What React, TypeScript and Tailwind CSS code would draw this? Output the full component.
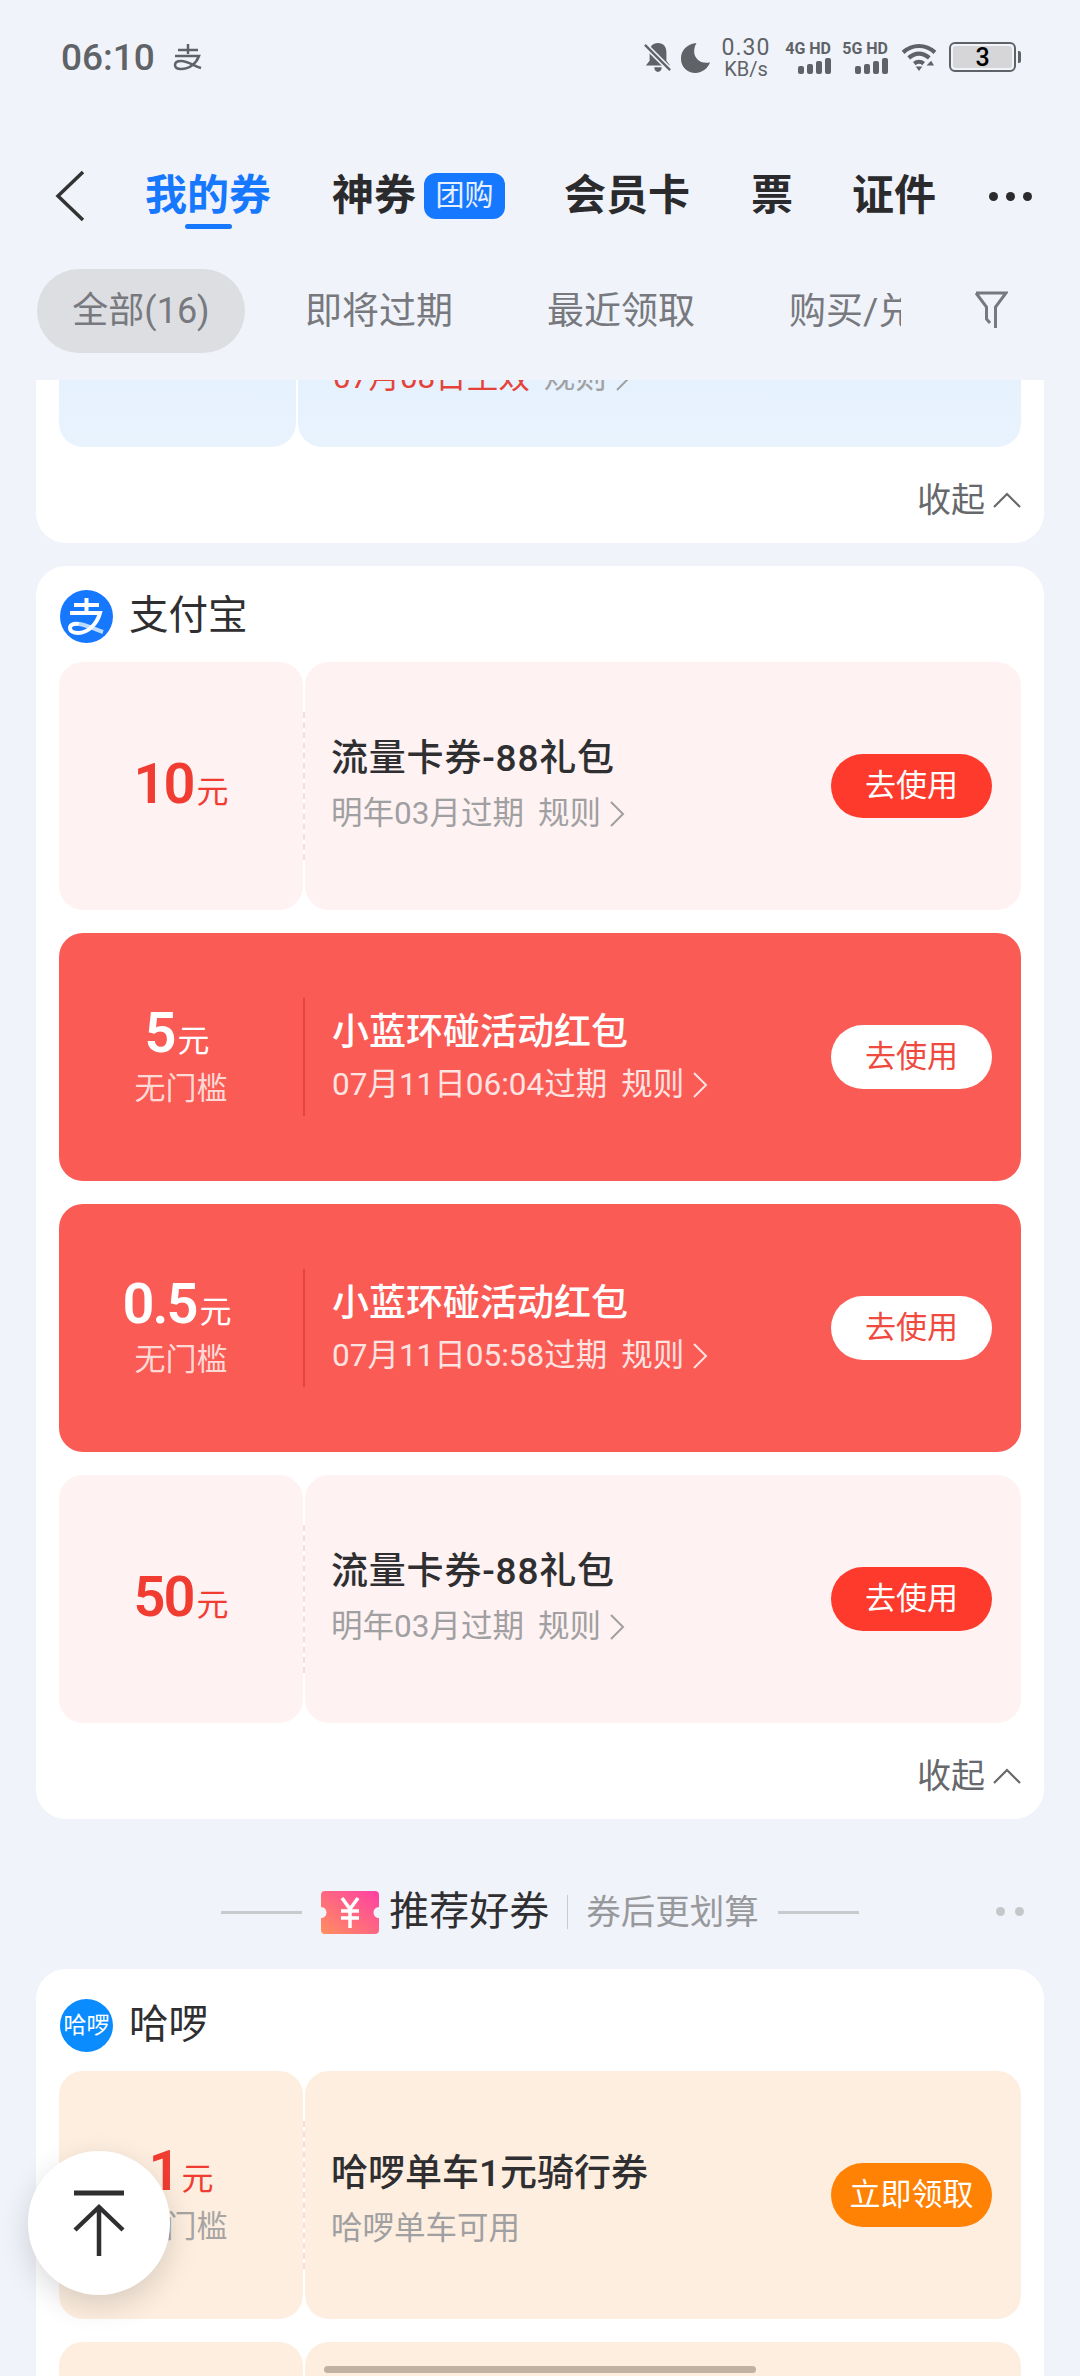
import type { ReactNode } from 'react';

const FONT = 'font-["Roboto","Noto_Sans_CJK_SC",sans-serif]';

type Tone = 'pink' | 'red' | 'cream';

interface Coupon {
  tone: Tone;
  amount: string;
  sub?: string;
  title: string;
  desc: string;
  rule?: boolean;
  cta: string;
}

const ALIPAY: Coupon[] = [
  { tone: 'pink', amount: '10', title: '流量卡券-88礼包', desc: '明年03月过期', rule: true, cta: '去使用' },
  { tone: 'red', amount: '5', sub: '无门槛', title: '小蓝环碰活动红包', desc: '07月11日06:04过期', rule: true, cta: '去使用' },
  { tone: 'red', amount: '0.5', sub: '无门槛', title: '小蓝环碰活动红包', desc: '07月11日05:58过期', rule: true, cta: '去使用' },
  { tone: 'pink', amount: '50', title: '流量卡券-88礼包', desc: '明年03月过期', rule: true, cta: '去使用' },
];

function StatusBar() {
  return (
    <div className="h-[114px] pl-[61px] pr-[59px] flex items-center justify-between text-[#5f6368]">
      <div className="flex items-center">
        <span className="text-[37px] leading-none font-medium">06:10</span>
        {/* 支付宝通知图标 */}
        <svg width="30" height="28" viewBox="0 0 30 28" className="ml-[18px]">
          <path d="M5 7h20M15 1v10M2 13h24C23 21 16 26 8 26c-4 0-6-1.500-6-4 0-3 3-4 6-4 7 0 13 5 20 7" fill="none" stroke="#5f6368" strokeWidth="2.500" />
        </svg>
      </div>
      <div className="flex items-center">
        {/* 静音 */}
        <svg width="28" height="32" viewBox="0 0 30 32" className="mr-[8px]">
          <path d="M15 1c6 0 9 4 9 10v9l4 5H2l4-5v-9C6 5 9 1 15 1zM11 27h8c0 3-2 5-4 5s-4-2-4-5z" fill="#5f6368" />
          <path d="M1 3l27 27" stroke="#f0f3f9" strokeWidth="6" />
          <path d="M1 3l27 27" stroke="#5f6368" strokeWidth="2.500" />
        </svg>
        {/* 勿扰 */}
        <svg width="31" height="31" viewBox="0 0 32 32" className="mr-[11px]">
          <path d="M17 1C8 2 1 8 1 17s7 15 15 15c7 0 13-5 15-11-8 2-14-2-16-8-1-4 0-9 2-12z" fill="#5f6368" />
        </svg>
        <div className="flex flex-col items-center w-[48px] mr-[13px] leading-none">
          <span className="text-[23px] h-[23px] tracking-[1px]">0.30</span>
          <span className="text-[20px] h-[20px]">KB/s</span>
        </div>
        <Signal label="4G HD" />
        <div className="w-[9px]" />
        <Signal label="5G HD" />
        <svg width="38" height="30" viewBox="0 0 38 32" className="ml-[12px] mr-[11px]">
          <path d="M2 11C12 2 26 2 36 11M8 17c7-6 15-6 22 0M14 23c3-2.500 7-2.500 10 0" fill="none" stroke="#5f6368" strokeWidth="4.500" />
          <path d="M15.500 26h7L19 31z" fill="#5f6368" />
          <path d="M27 25l5-5 3 5z" fill="#5f6368" />
        </svg>
        <div className="w-[67px] h-[30px] rounded-[6px] border-2 border-[#5f6368] p-[2px] flex">
          <div className="flex-1 bg-[#d6d6d8] rounded-[3px] flex items-center justify-center text-[25px] font-medium text-black leading-none">3</div>
        </div>
        <div className="w-[3px] h-[12px] ml-[2px] bg-[#5f6368] rounded-r-[2px]" />
      </div>
    </div>
  );
}

function Signal({ label }: { label: string }) {
  return (
    <div className="flex flex-col items-end w-[48px]">
      <span className="text-[16px] leading-[18px] font-bold whitespace-nowrap">{label}</span>
      <div className="flex items-end gap-[3px] h-[16px]">
        <span className="w-[6px] h-[8px] rounded-[2px] bg-[#5f6368]" />
        <span className="w-[6px] h-[10px] rounded-[2px] bg-[#5f6368]" />
        <span className="w-[6px] h-[13px] rounded-[2px] bg-[#5f6368]" />
        <span className="w-[6px] h-[16px] rounded-[2px] bg-[#5f6368]" />
      </div>
    </div>
  );
}

function NavTabs() {
  return (
    <div className="h-[134px] pt-[30px] relative flex items-center text-[#2b2b2d] font-bold text-[42px] leading-none">
      <svg width="32" height="52" viewBox="0 0 32 52" className="ml-[54px] mr-[59px]">
        <path d="M29 2L4 26l25 24" fill="none" stroke="#333" strokeWidth="3.500" />
      </svg>
      <div className="relative text-[#1677ff] mr-[61px]">
        我的券
        <span className="absolute left-[40px] top-[49px] w-[47px] h-[5px] rounded-full bg-[#1677ff]" />
      </div>
      <span>神券</span>
      <span className="ml-[8px] mr-[59px] w-[81px] h-[46px] rounded-[12px] bg-[#1677ff] text-[#e6f0ff] text-[29px] font-normal flex items-center justify-center">
        团购
      </span>
      <span className="mr-[61px]">会员卡</span>
      <span className="mr-[59px]">票</span>
      <span>证件</span>
      <div className="ml-[53px] flex gap-[8px]">
        <span className="w-[9px] h-[9px] rounded-full bg-[#2b2b2d]" />
        <span className="w-[9px] h-[9px] rounded-full bg-[#2b2b2d]" />
        <span className="w-[9px] h-[9px] rounded-full bg-[#2b2b2d]" />
      </div>
    </div>
  );
}

function FilterRow() {
  return (
    <div className="h-[132px] flex items-start text-[37px] leading-none text-[#77797e]">
      <div className="ml-[37px] mt-[21px] w-[208px] h-[84px] rounded-[42px] bg-[#dcdee2] flex items-center justify-center text-[36px]">
        全部(16)
      </div>
      <div className="mt-[21px] h-[84px] flex items-center">
        <span className="ml-[60px]">即将过期</span>
        <span className="ml-[94px]">最近领取</span>
        <span className="ml-[94px] w-[112px] overflow-hidden whitespace-nowrap">购买/兑换</span>
      </div>
      <svg width="34" height="38" viewBox="0 0 34 38" className="ml-[73px] mt-[43px]">
        <path d="M2 2h30L21.500 16v21M2 2l10.500 14v12l3.500 4" fill="none" stroke="#77797e" strokeWidth="3" />
      </svg>
    </div>
  );
}

function CollapseRow() {
  return (
    <div className="h-[96px] pt-[10px] pr-[23px] flex items-center justify-end gap-[8px] text-[34px] text-[#66686c] leading-none">
      收起
      <svg width="28" height="16" viewBox="0 0 28 16">
        <path d="M1 15L14 2l13 13" fill="none" stroke="#66686c" strokeWidth="2.200" />
      </svg>
    </div>
  );
}

function CouponRow({ c }: { c: Coupon }) {
  if (c.tone === 'red') {
    return (
      <div className="h-[248px] mx-[23px] rounded-[24px] bg-[#fa5b55] flex items-center text-white">
        <div className="w-[244px] flex flex-col items-center">
          <Amount value={c.amount} className="text-white mr-[8px]" />
          <span className="text-[31px] leading-[40px] text-[#fdd9d6] mt-[8px]">{c.sub}</span>
        </div>
        <div className="w-[2px] h-[118px] bg-[#e5443f]" />
        <div className="flex-1 pl-[27px]">
          <div className="text-[37px] leading-[48px] font-medium">{c.title}</div>
          <Desc text={c.desc} rule={c.rule} className="text-[#fde3e1] mt-[8px]" />
        </div>
        <div className="mr-[29px] w-[161px] h-[64px] rounded-full bg-white text-[#f04a3e] text-[31px] flex items-center justify-center">
          {c.cta}
        </div>
      </div>
    );
  }

  const pink = c.tone === 'pink';
  const bg = pink ? 'bg-[#fef2f3]' : 'bg-[#fdeedf]';
  const btn = pink ? 'bg-[#fe3a2d]' : 'bg-[#ff8205]';
  return (
    <div className="h-[248px] mx-[23px] flex gap-[2px]">
      <div className={`w-[244px] rounded-[24px] ${bg} flex flex-col items-center justify-center relative ${c.sub ? '' : 'pb-[5px]'}`}>
        <Amount value={c.amount} className="text-[#f13c32]" />
        {c.sub && <span className="text-[31px] leading-[40px] text-[#a7a5a3] mt-[8px]">{c.sub}</span>}
        <div className="absolute -right-[2px] top-[50px] h-[148px] border-r-2 border-dashed border-[#f7dcdc]" />
      </div>
      <div className={`flex-1 rounded-[24px] ${bg} flex items-center`}>
        <div className={`flex-1 pl-[26px] ${pink ? 'pb-[3px]' : 'pt-[9px]'}`}>
          <div className={`text-[37px] leading-[48px] text-[#2f2f31] font-medium ${pink ? 'tracking-[0.8px]' : ''}`}>{c.title}</div>
          <Desc text={c.desc} rule={c.rule} className="text-[#a09fa1] mt-[11px]" />
        </div>
        <div className={`mr-[29px] w-[161px] h-[64px] rounded-full text-white text-[31px] flex items-center justify-center ${btn}`}>
          {c.cta}
        </div>
      </div>
    </div>
  );
}

function Amount({ value, className }: { value: string; className: string }) {
  return (
    <div className={`flex items-baseline leading-none ${className}`}>
      <span className="text-[56px] font-semibold tracking-[-2px]">{value}</span>
      <span className="text-[32px] ml-[3px]">元</span>
    </div>
  );
}

function RuleChevron() {
  return (
    <svg width="16" height="28" viewBox="0 0 16 28" className="ml-[8px]">
      <path d="M2 2l12 12L2 26" fill="none" stroke="currentColor" strokeWidth="2" />
    </svg>
  );
}

function Desc({ text, rule, className }: { text: string; rule?: boolean; className: string }) {
  return (
    <div className={`flex items-center text-[31.500px] leading-[40px] whitespace-nowrap ${className}`}>
      {text}
      {rule && (
        <>
          <span className="ml-[14px]">规则</span>
          <RuleChevron />
        </>
      )}
    </div>
  );
}

function AlipayLogo() {
  return (
    <svg width="53" height="53" viewBox="0 0 53 53">
      <circle cx="26.500" cy="26.500" r="26.500" fill="#1677ff" />
      <path d="M19 34c8 1 15 5 24 8" fill="none" stroke="#bcdcff" strokeWidth="4" />
      <path d="M14 15h25M26.500 8v15M10 23h30c-3 11-12 20-22 20-5 0-8-2-8-5 0-3.500 4-5 9-4" fill="none" stroke="#fff" strokeWidth="4" />
    </svg>
  );
}

function BrandHead({ logo, name }: { logo: ReactNode; name: string }) {
  return (
    <div className="h-[96px] pt-[4px] pl-[24px] flex items-center gap-[16px] text-[39.500px] text-[#2f2f31] leading-none">
      {logo}
      {name}
    </div>
  );
}

function Section() {
  return (
    <div className="h-[150px] pt-[36px] relative flex items-center justify-center text-[#2f2f31]">
      <div className="w-[81px] h-[3px] bg-[#c8cacd]" />
      <svg width="58" height="43" viewBox="0 0 58 43" className="ml-[19px]">
        <defs>
          <linearGradient id="ticket" x1="0" y1="1" x2="1" y2="0">
            <stop offset="0" stopColor="#ff8f5e" />
            <stop offset="1" stopColor="#ff3fa4" />
          </linearGradient>
        </defs>
        <path d="M4 0h50a4 4 0 0 1 4 4v12a5.500 5.500 0 0 0 0 11v12a4 4 0 0 1-4 4H4a4 4 0 0 1-4-4V27a5.500 5.500 0 0 0 0-11V4a4 4 0 0 1 4-4z" fill="url(#ticket)" />
        <path d="M21 7l8 11 8-11M29 18v19M20 20h18M20 27h18" fill="none" stroke="#fff" strokeWidth="3.500" />
      </svg>
      <span className="ml-[10px] text-[40px] leading-none">推荐好券</span>
      <div className="ml-[18px] w-[1px] h-[34px] bg-[#c8cacd]" />
      <span className="ml-[18px] text-[34.500px] leading-none text-[#98999c]">券后更划算</span>
      <div className="ml-[19px] w-[81px] h-[3px] bg-[#c8cacd]" />
      <div className="absolute right-[56px] top-[88px] flex gap-[10px]">
        <span className="w-[9px] h-[9px] rounded-full bg-[#c5c7ca]" />
        <span className="w-[9px] h-[9px] rounded-full bg-[#c5c7ca]" />
      </div>
    </div>
  );
}

export default function App() {
  return (
    <div className={`${FONT} relative w-[1080px] h-[2376px] overflow-hidden bg-[#f0f3f9] flex flex-col`}>
      <StatusBar />
      <NavTabs />
      <FilterRow />

      <div className="flex-1 overflow-hidden">
        {/* 上一张卡片，只露出底部 */}
        <div className="-mt-[181px] mx-[36px] bg-white rounded-[30px]">
          <div className="h-[248px] mx-[23px] flex gap-[2px]">
            <div className="w-[237px] rounded-[24px] bg-gradient-to-b from-[#dcecfd] to-[#e9f3fe]" />
            <div className="flex-1 rounded-[24px] bg-gradient-to-b from-[#dcecfd] to-[#e9f3fe] flex items-start pl-[35px] pt-[159px]">
              <span className="text-[31.500px] leading-[40px] text-[#e5423a]">07月08日生效</span>
              <span className="ml-[14px] text-[31.500px] leading-[40px] text-[#a09fa1]">规则</span>
              <span className="text-[#a09fa1] mt-[6px]">
                <RuleChevron />
              </span>
            </div>
          </div>
          <CollapseRow />
        </div>

        <div className="mt-[23px] mx-[36px] bg-white rounded-[30px]">
          <BrandHead logo={<AlipayLogo />} name="支付宝" />
          <div className="flex flex-col gap-[23px]">
            {ALIPAY.map((c, i) => (
              <CouponRow key={i} c={c} />
            ))}
          </div>
          <CollapseRow />
        </div>

        <Section />

        <div className="mx-[36px] bg-white rounded-t-[30px]">
          <div className="pt-[6px]">
            <BrandHead
              logo={
                <span className="w-[53px] h-[53px] rounded-full bg-[#0a8cff] text-white text-[23px] flex items-center justify-center">
                  哈啰
                </span>
              }
              name="哈啰"
            />
          </div>
          <div className="flex flex-col gap-[23px]">
            <CouponRow c={{ tone: 'cream', amount: '1', sub: '无门槛', title: '哈啰单车1元骑行券', desc: '哈啰单车可用', cta: '立即领取' }} />
            <CouponRow c={{ tone: 'cream', amount: '1', sub: '无门槛', title: '哈啰单车1元骑行券', desc: '哈啰单车可用', cta: '立即领取' }} />
          </div>
        </div>
      </div>

      {/* 回到顶部 */}
      <div className="absolute left-[28px] top-[2151px] w-[142px] h-[144px] rounded-full bg-white shadow-[0_10px_30px_rgba(0,0,0,0.15)] flex items-center justify-center">
        <svg width="52" height="66" viewBox="0 0 52 66">
          <path d="M1 3h50" stroke="#2f2f31" strokeWidth="5" />
          <path d="M26 66V18M2 40L26 17l24 23" fill="none" stroke="#2f2f31" strokeWidth="4.500" />
        </svg>
      </div>

      <div className="absolute left-[324px] top-[2366px] w-[432px] h-[7px] rounded-full bg-[#bfb2a5]" />
    </div>
  );
}
